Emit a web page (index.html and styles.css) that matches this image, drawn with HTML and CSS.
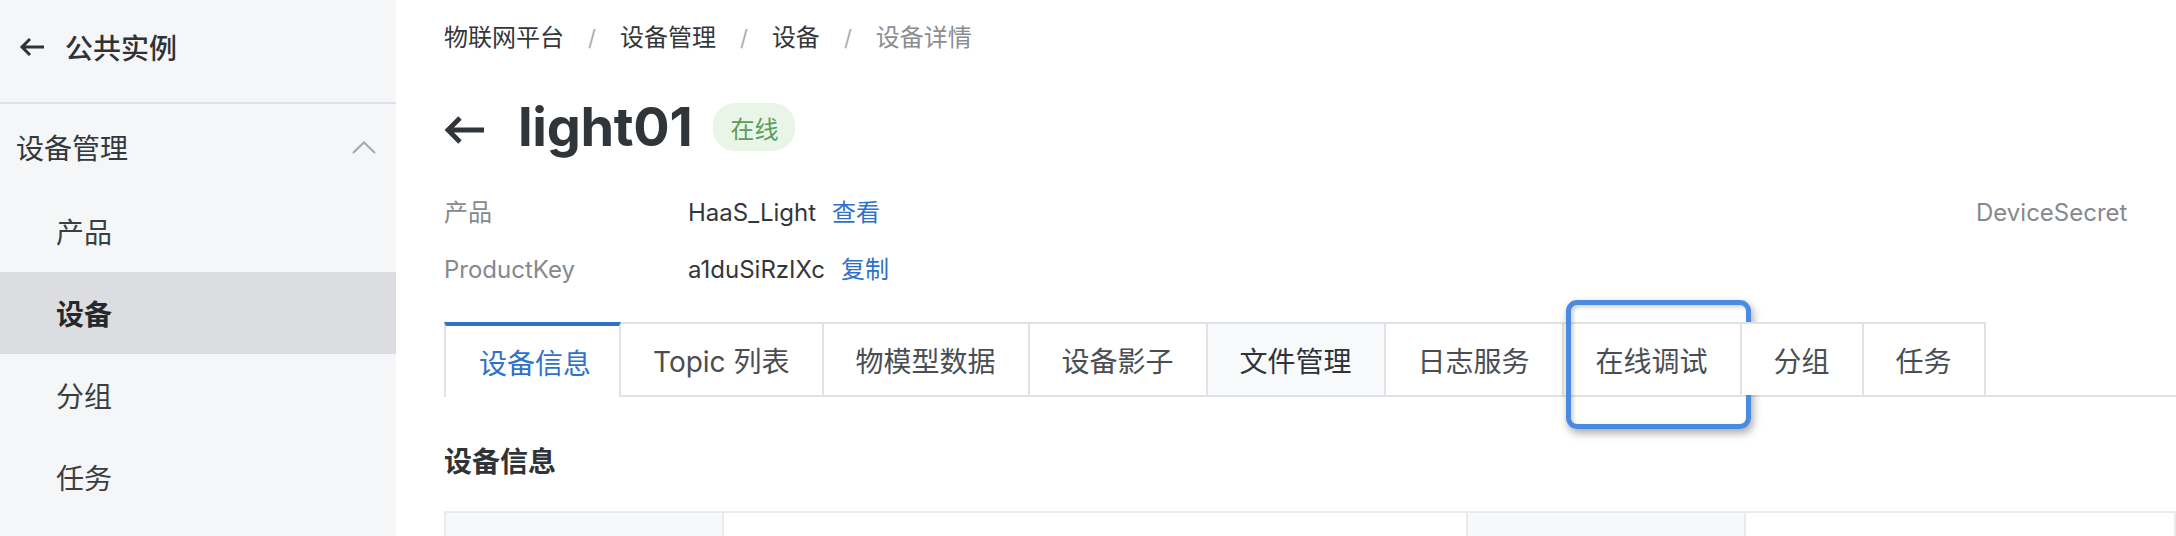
FILE: index.html
```html
<!DOCTYPE html>
<html lang="zh-CN">
<head>
<meta charset="utf-8">
<title>设备详情</title>
<link rel="stylesheet" href="styles.css">
</head>
<body>
<aside class="sidebar">
  <div class="side-head">
    <svg class="side-back" width="26" height="20" viewBox="0 0 26 20"><path d="M25 10 H3 M11 2 L3 10 L11 18" fill="none" stroke="#2f3337" stroke-width="3"/></svg>
    <span>公共实例</span>
  </div>
  <div class="group-head">
    <span>设备管理</span>
    <svg width="24" height="13" viewBox="0 0 24 13"><path d="M1 12 L12 1.5 L23 12" fill="none" stroke="#a5a7aa" stroke-width="2"/></svg>
  </div>
  <div class="menu-item">产品</div>
  <div class="menu-item active">设备</div>
  <div class="menu-item">分组</div>
  <div class="menu-item">任务</div>
</aside>
<main class="main">
  <nav class="crumbs">
    <span class="crumb">物联网平台</span><span class="sep">/</span>
    <span class="crumb">设备管理</span><span class="sep">/</span>
    <span class="crumb">设备</span><span class="sep">/</span>
    <span class="crumb current">设备详情</span>
  </nav>
  <div class="title-row">
    <svg class="title-back" width="40" height="30" viewBox="0 0 40 30"><path d="M40 15 H4 M16 3 L4 15 L16 27" fill="none" stroke="#30353a" stroke-width="4.8"/></svg>
    <h1 class="title">light01</h1>
    <span class="badge">在线</span>
  </div>
  <div class="info">
    <div class="label">产品</div>
    <div class="value">HaaS_Light<a class="link">查看</a></div>
    <div class="label">DeviceSecret</div>
    <div class="value"></div>
    <div class="label">ProductKey</div>
    <div class="value">a1duSiRzIXc<a class="link">复制</a></div>
    <div class="label"></div>
    <div class="value"></div>
  </div>
  <div class="tabs">
    <div class="tab active">设备信息</div>
    <div class="tab">Topic 列表</div>
    <div class="tab">物模型数据</div>
    <div class="tab">设备影子</div>
    <div class="tab hover">文件管理</div>
    <div class="tab">日志服务</div>
    <div class="tab marked">在线调试<span class="annot"></span></div>
    <div class="tab">分组</div>
    <div class="tab">任务</div>
  </div>
  <h2 class="section-title">设备信息</h2>
  <div class="table">
    <div class="cell head"></div>
    <div class="cell"></div>
    <div class="cell head"></div>
    <div class="cell"></div>
  </div>
</main>
</body>
</html>
```
FILE: styles.css
```css
* { box-sizing: border-box; }
html, body { margin: 0; padding: 0; }
body {
  width: 2176px;
  height: 536px;
  overflow: hidden;
  display: flex;
  font-family: Inter, "Noto Sans CJK SC", sans-serif;
  color: #333;
  background: #fff;
}
.sidebar {
  width: 396px;
  flex-shrink: 0;
  background: #f5f6f8;
}
.side-head {
  height: 104px;
  border-bottom: 2px solid #e1e2e5;
  padding: 0 0 8px 19px;
  display: flex;
  align-items: center;
  gap: 20px;
  font-size: 28px;
  font-weight: 500;
  color: #2f3337;
}
.group-head {
  height: 86px;
  display: flex;
  align-items: center;
  justify-content: space-between;
  padding: 0 20px 0 16px;
  font-size: 28px;
  color: #34383c;
}
.menu-item {
  height: 82px;
  display: flex;
  align-items: center;
  padding-left: 56px;
  font-size: 28px;
  color: #3a3e42;
}
.menu-item.active {
  background: #dcdde0;
  font-weight: 700;
  color: #25292d;
}
.main {
  flex: 1;
  min-width: 0;
  overflow: hidden;
  padding-left: 48px;
}
.crumbs {
  margin-top: 21px;
  height: 34px;
  line-height: 34px;
  display: flex;
  align-items: center;
  font-size: 24px;
  white-space: nowrap;
}
.crumb { color: #33373b; }
.crumb.current { color: #8a8d91; }
.sep { margin: 0 24px; color: #a9acb0; font-size: 22px; }
.title-row {
  margin-top: 42px;
  height: 60px;
  display: flex;
  align-items: center;
}
.title-back { margin-right: 34px; margin-top: 6px; }
.title {
  margin: 0;
  font-size: 54px;
  line-height: 60px;
  font-weight: 700;
  color: #30353a;
  letter-spacing: -0.3px;
}
.badge {
  margin-left: 21px;
  height: 48px;
  padding: 0 17px;
  border-radius: 22px;
  background: #e9f5e7;
  color: #5c9d5b;
  font-size: 24px;
  display: flex;
  align-items: center;
}
.info {
  margin-top: 39px;
  display: grid;
  grid-template-columns: 244px 1288px 244px 300px;
  row-gap: 23px;
  font-size: 24px;
  line-height: 34px;
  white-space: nowrap;
}
.label { color: #86898d; }
.value { color: #33373b; }
.link { margin-left: 16px; color: #2f70c9; }
.tabs {
  margin-top: 35px;
  display: flex;
  align-items: flex-start;
  border-bottom: 2px solid #e0e2e5;
  height: 75px;
}
.tab {
  position: relative;
  height: 73px;
  padding: 0 32px;
  border-top: 2px solid #e0e2e5;
  border-right: 2px solid #e0e2e5;
  display: flex;
  align-items: center;
  font-size: 28px;
  color: #4a4e53;
  white-space: nowrap;
  background: #fff;
}
.tab.active {
  height: 75px;
  border-top: 4px solid #2f72c8;
  border-left: 2px solid #e0e2e5;
  padding: 0 28px 0 33px;
  color: #2f72c8;
}
.tab.hover {
  background: #f8f9fb;
  color: #2f3337;
}
.annot {
  position: absolute;
  left: 2px;
  top: -24px;
  width: 185px;
  height: 129px;
  border: 5px solid #4a8ae0;
  border-radius: 11px;
  box-shadow: 2px 4px 8px rgba(0, 0, 0, 0.35), inset 2px 2px 4px rgba(0, 0, 0, 0.2);
}
.section-title {
  margin: 45px 0 0;
  font-size: 28px;
  line-height: 40px;
  font-weight: 700;
  color: #2f3337;
}
.table {
  margin-top: 29px;
  display: grid;
  grid-template-columns: 278px 744px 278px 1fr;
  border-top: 2px solid #e9eaec;
  border-left: 2px solid #e9eaec;
}
.cell {
  height: 80px;
  border-right: 2px solid #e9eaec;
}
.cell.head { background: #f7f8fa; }
```
